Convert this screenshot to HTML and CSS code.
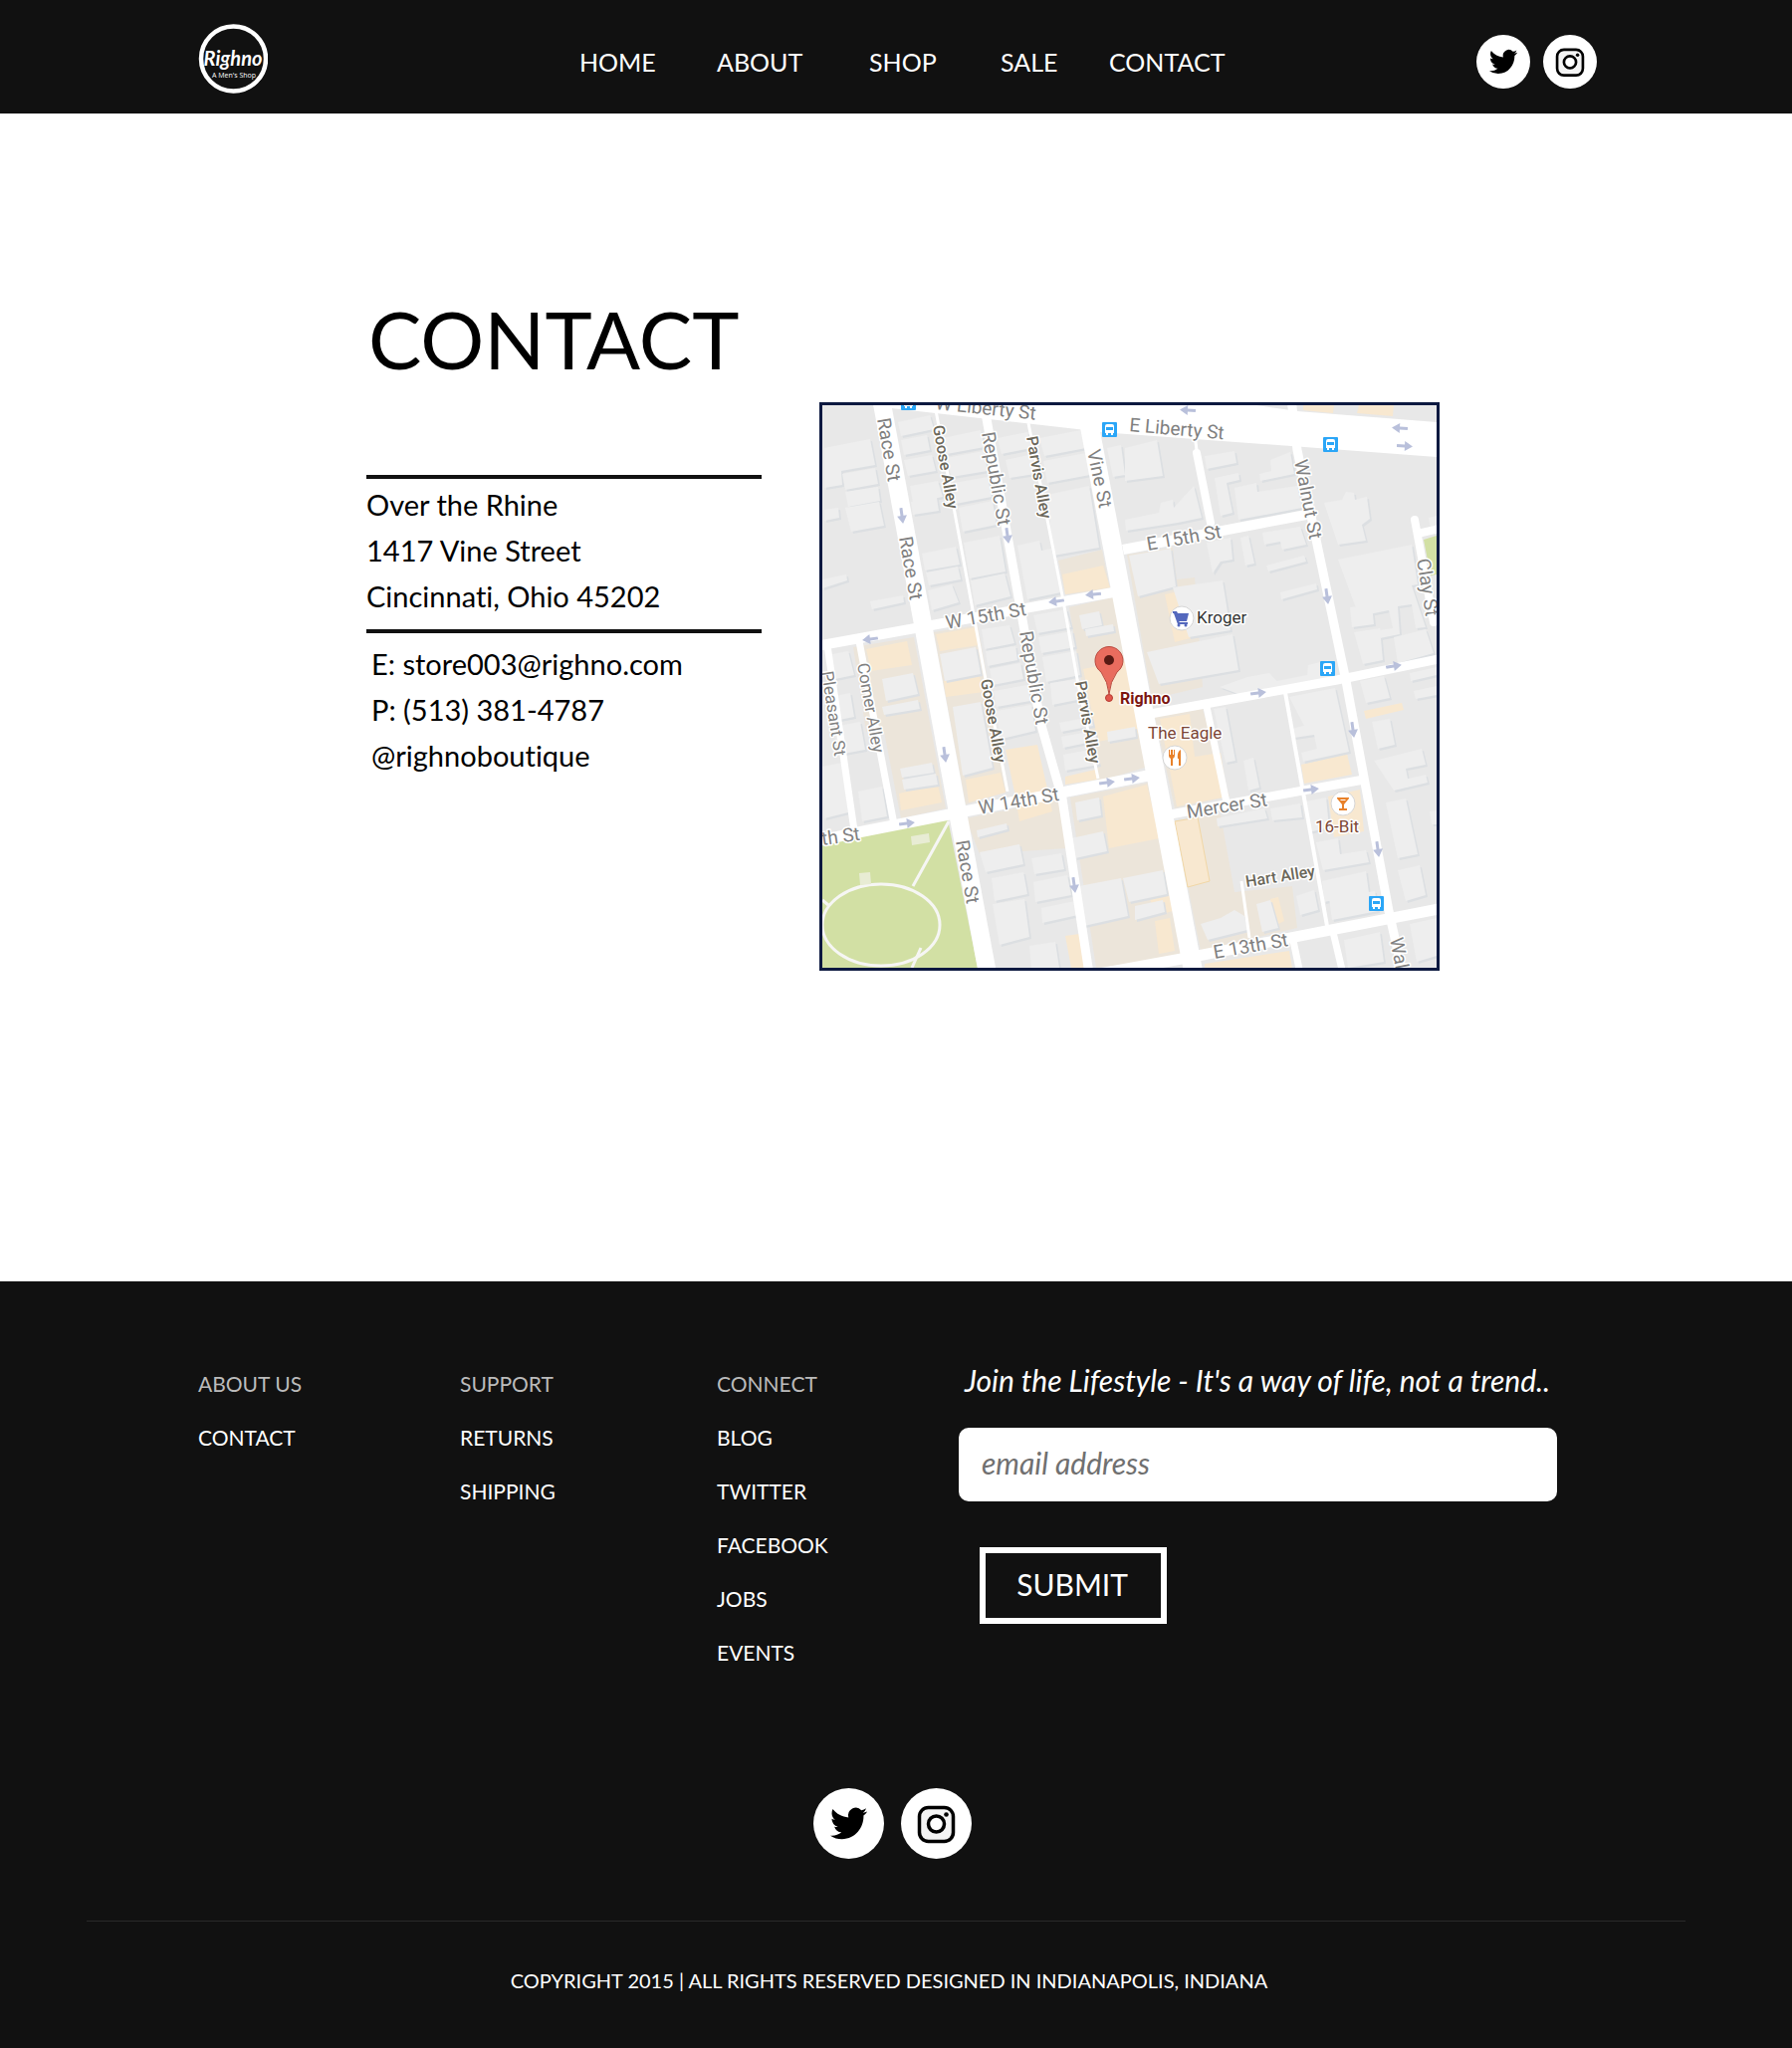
FILE: index.html
```html
<!DOCTYPE html>
<html lang="en">
<head>
<meta charset="utf-8">
<meta name="viewport" content="width=device-width, initial-scale=1">
<title>Righno - Contact</title>
<link rel="stylesheet" href="styles.css">
</head>
<body>
<svg class="defs" aria-hidden="true">
  <symbol id="twitter" viewBox="0 0 71 71">
    <circle cx="35.500" cy="35.500" r="35.500" fill="#fff"/>
    <path transform="translate(17 16) scale(1.550 1.620)" d="M23.953 4.570a10 10 0 01-2.825.775 4.958 4.958 0 002.163-2.723c-.951.555-2.005.959-3.127 1.184a4.920 4.920 0 00-8.384 4.482C7.690 8.095 4.067 6.130 1.640 3.162a4.822 4.822 0 00-.666 2.475c0 1.710.870 3.213 2.188 4.096a4.904 4.904 0 01-2.228-.616v.060a4.923 4.923 0 003.946 4.827 4.996 4.996 0 01-2.212.085 4.936 4.936 0 004.604 3.417 9.867 9.867 0 01-6.102 2.105c-.390 0-.779-.023-1.170-.067a13.995 13.995 0 007.557 2.209c9.053 0 13.998-7.496 13.998-13.985 0-.210 0-.420-.015-.630A9.935 9.935 0 0024 4.590z"/>
  </symbol>
  <symbol id="instagram" viewBox="0 0 71 71">
    <circle cx="35.500" cy="35.500" r="35.500" fill="#fff"/>
    <rect x="18.500" y="19.500" width="34" height="34" rx="9" fill="#f4f4f4" stroke="#000" stroke-width="3.500"/>
    <circle cx="35.500" cy="36" r="8" fill="#fff" stroke="#000" stroke-width="3.500"/>
    <circle cx="45.500" cy="26.500" r="2.300"/>
  </symbol>
  <symbol id="bus" viewBox="0 0 15 15">
    <rect width="15" height="15" rx="1" fill="#2ba6f7"/>
    <path fill="#fff" fill-rule="evenodd" d="M3 4q0-2 2-2h5q2 0 2 2v7h-1v2H9v-2H6v2H4v-2H3zM4 5v3h7V5z"/>
  </symbol>
  <symbol id="arrow" viewBox="0 0 16 10">
    <path fill="#b9c0db" d="M0 3.500h8V0l8 5-8 5V6.500H0z"/>
  </symbol>
</svg>

<header class="site-header">
  <a class="logo" href="#" aria-label="Righno, a men's shop">
    <svg viewBox="0 0 70 70" width="70" height="70">
      <circle cx="35.500" cy="35" r="32.500" fill="none" stroke="#fff" stroke-width="4.500"/>
      <text class="logo-name" x="35" y="42" text-anchor="middle">Righno</text>
      <text class="logo-tag" x="36" y="54" text-anchor="middle">A Men's Shop</text>
    </svg>
  </a>
  <nav class="main-nav">
    <a href="#">HOME</a>
    <a href="#">ABOUT</a>
    <a href="#">SHOP</a>
    <a href="#">SALE</a>
    <a href="#">CONTACT</a>
  </nav>
  <div class="social social-small">
    <a href="#" aria-label="Twitter"><svg><use href="#twitter"/></svg></a>
    <a href="#" aria-label="Instagram"><svg><use href="#instagram"/></svg></a>
  </div>
</header>

<main class="contact">
  <section class="details">
    <h1>CONTACT</h1>
    <address>
      <p class="street">Over the Rhine<br>1417 Vine Street<br>Cincinnati, Ohio 45202</p>
      <p class="reach">E: store003@righno.com<br>P: (513) 381-4787<br>@righnoboutique</p>
    </address>
  </section>

  <div class="map">
    <svg viewBox="826 407 617 565" role="img" aria-label="Map of Vine Street">
      <rect x="826" y="407" width="617" height="565" fill="#e8e8e8"/>

      <!-- commercial ground -->
      <g fill="#ece5da">
        <path d="M857 650L918 640L950 812L905 822L888 735L870 735z"/>
        <path d="M938 635L982 628L1012 795L970 808z"/>
        <path d="M1074 610L1118 600L1153 770L1103 785z"/>
        <path d="M970 822L1063 803L1072 852L984 858z"/>
        <path d="M1075 801L1153 786L1189 962L1101 972z"/>
        <path d="M1132 557L1178 550L1182 582L1200 580L1208 690L1157 702z"/>
        <path d="M1160 720L1208 712L1235 800L1180 812z"/>
        <path d="M1180 825L1226 818L1240 896L1298 890L1303 932L1206 955z"/>
        <path d="M1063 563L1107 552L1115 592L1070 597z"/>
      </g>
      <g fill="#f8e8d0">
        <path d="M870 652L911 644L916 668L875 674zM903 797L942 788L946 806L905 814z"/>
        <path d="M940 637L980 630L983 648L944 654zM948 684L984 679L988 695L950 700zM970 783L1005 776L1010 796L973 806z"/>
        <path d="M1010 753L1042 748L1052 792L1057 815L1024 825L1020 800z"/>
        <path d="M1067 577L1108 568L1115 590L1070 597zM1088 672L1140 662L1150 735L1103 745zM1070 780L1100 773L1102 783L1070 788z"/>
        <path d="M1108 800L1152 788L1165 842L1114 852zM1155 902L1175 898L1178 915L1160 920zM1160 925L1175 922L1180 955L1164 958zM1070 940L1084 938L1090 972L1076 972z"/>
        <path d="M1170 597L1192 592L1200 640L1180 645zM1165 722L1195 717L1200 760L1226 756L1233 800L1182 810z"/>
        <path d="M1180 825L1203 821L1215 885L1193 891z" stroke="#f1d7a6"/>
        <path d="M1276 903L1284 901L1290 925L1278 931zM1210 968L1295 955L1298 972H1210z"/>
        <path d="M1307 768L1353 757L1358 778L1310 787zM1334 800L1366 793L1370 835L1340 841zM1370 714L1408 706L1410 713L1372 722z"/>
        <path d="M1309 407H1340L1339 415L1309 412zM1365 407H1400L1399 418L1363 415z"/>
      </g>

      <!-- buildings over their shadows -->
      <use href="#blocks" x="2" y="2" class="shade"/>
      <use href="#blocks" class="roof"/>
      <defs>
        <g id="blocks">
          <path d="M828 450l46-9 5 26-34 6 1 14-18 3zM846 476l33-6 3 16-33 6zM849 494l33-5 2 14-32 6zM849 510l34-6 5 24-33 6zM828 512l14-2 1 10-15 3zM826 582l24-5 1 6-25 8zM874 604l33-6 1 7-32 7z"/>
          <path d="M902 424l32-7 4 14-33 7zM905 442l26-5 3 15-26 5zM908 462l28-5 4 16-28 5zM914 488l28-5 5 16-30 6zM915 504l26-4 2 13-26 4zM926 556l34-7 4 18-35 6zM930 575l32-6 3 13-32 6zM932 593l24-6 7 18-27 8z"/>
          <path d="M947 440l38-8 4 17-38 7zM950 460l38-7 4 20-36 6zM958 485l34-6 4 20-36 7zM963 510l34-7 4 24-34 7zM968 545l36-7 6 36-36 7zM975 583l34-7 6 23-36 9z"/>
          <path d="M1002 440l30-6 4 16-30 6zM1010 462l32-7 4 20-32 5zM1022 548l22-5 2 10 10-2 10 44-34 7z"/>
          <path d="M1044 440l42-8 5 18-42 8zM1048 463l43-8 4 22-43 8zM1052 497l42-9 10 62-46 8z"/>
          <path d="M832 658l20-4 6 24-24 5zM886 682l31-6 5 21-32 7zM886 710l36-7 2 9-36 6zM904 772l32-6 2 10-32 5zM906 783l34-6 2 11-34 5zM834 700l20-4 4 24-20 4zM838 730l26-5 5 28-27 5zM826 770l20-4 6 50-24 6zM862 795l24-5 5 30-25 5z"/>
          <path d="M944 657l36-7 5 27-36 7zM957 710l28-5 12 66-30 8zM986 632l28-4 5 18-30 6zM990 654l30-5 2 14-30 6zM994 672l31-6 3 16-31 6zM998 694l34-6 3 16-34 6zM1000 714l36-6 4 26-34 8z"/>
          <path d="M1038 618l33-6 5 18-34 6zM1043 640l34-6 3 16-34 6zM1047 660l34-6 4 24-34 7zM1055 686l28-4 4 20-30 6zM1064 726l32-6 2 9-32 6zM1066 740l34-6 2 10-34 7zM1068 758l32-6 4 16-34 6z"/>
          <path d="M1084 618l20-4 3 14-20 4zM1090 632l28-5 1 7-28 5zM1112 735l28-5 1 10-28 5z"/>
          <path d="M981 834l30-7 1 6-30 8zM984 856l40-8 4 20-38 8zM996 882l32-6 4 22-33 7zM997 908l32-5 5 38-30 8zM1036 862l30-5 3 16-30 5zM1038 886l34-7 4 20-36 7zM1046 912l34-7 3 14-36 8zM1034 950l26-4 4 26h-28z"/>
          <path d="M1076 842l32-7 4 20-32 7zM1084 890l42-8 7 38-44 10zM1080 806l24-5 2 18-24 5zM1128 882l40-8 4 24-38 8zM1140 910l28-6 2 12-30 8z"/>
          <path d="M1130 450l32-8 6 36-38 5zM1112 450l14-3 4 30-12 2zM1130 522l34-7 2-10 12-3 1 8 20-22 8 32-24 5-52 8z"/>
          <path d="M1210 458l30-5 2 12-30 6zM1220 480l24-5 1 7-13 3 6 30-12 3zM1240 490l22-5 1 9 40-6 5 22-64 12zM1276 462l20-8 4 22-34 7-1-7 12-3z"/>
          <path d="M1212 545l24-5 2 22-12 2-8 12zM1246 540l8-2 6 28-9 2zM1272 568l38-10 2 6-38 10zM1286 595l36-9 1 6-36 10zM1268 535l38-6 6 18-24 5-2-8-16 3zM1134 558l42-7 5 38-38 10zM1178 590l50-7 8 50-42 7zM1152 655l86-18 6 36-80 14z"/>
          <path d="M1225 690l28-10 22-4 8 8 30-6 1-10 20-5 5 18-90 18zM1330 505l18-3 4-8 8 1 1 7 12-3 3 22-8 6 4 16-28 4z"/>
          <path d="M1344 562l74-15 6 40-6 1 14 42-10 1-4-24-14 2 2 28-20 4-1-8 14-2-4-18-30 6zM1356 610l22-3 2 20-22 3zM1360 635l26-4 3 32-20 4zM1400 640l32-8 8 24-36 10zM1435 520l8-2v12l-6 1zM1416 676l27-6v8l-26 6zM1366 684l24-5 6 22-24 5z"/>
          <path d="M1219 712l12-2 10 54-10 2zM1249 764l10-3 6 30-11 3zM1295 700l46-9 14 64-46 10-2-9 16-4-3-14-20 3-2-9 12-3z"/>
          <path d="M1222 822l48-10 3 10-50 8zM1276 812l30-5 2 14-30 3zM1312 805l20-4 3 30-20 5zM1322 846l22-4 2 16 26-4 3 12-46 8zM1328 885l44-10 3 22-45 9zM1335 902l46-7 3 20-46 9z"/>
          <path d="M1206 928l20-6 14-8 10 6 3 14-40 10zM1262 908l14-4 8 28-16 4zM1302 900l18-6 4 20-18 5zM1378 725l18-3 5 26-17 4zM1380 764l48-12 4 16-20 4 2 10 18-4 2 8-34 8zM1392 806l20-4 12 56-20 4zM1404 874l22-5 6 30-20 6zM1416 928l27-6v38l-20 6zM1350 944l36-8 4 30-36 6zM1436 815l7-1v14h-5zM1420 694l23-5v9l-21 4z"/>
        </g>
      </defs>

      <!-- park and green -->
      <path fill="#d2e0a4" d="M826 848L952 823L982 972H826zM1430 542L1443 538V577L1437 578z"/>
      <g class="park-path">
        <ellipse cx="885" cy="929" rx="59" ry="41"/>
        <path d="M953 825L917 890M925 952L916 972M826 904l6 5"/>
      </g>
      <path fill="#e8ecd4" d="M915 840l18-3 1 9-18 3zM863 877l11-1 1 12-11 1z"/>

      <!-- streets -->
      <path fill="#fff" d="M885 407H1262L1303 413L1443 424V459L1297 448L1105 434L1082 431L895 410z"/>
      <g class="road">
        <path stroke-width="18" d="M885 400L992 978"/>
        <path stroke-width="19" d="M1094 426L1199 978"/>
        <path stroke-width="9" d="M990 415L1028 628L1045 725L1067 802L1094 978"/>
        <path stroke-width="3" d="M940 412L988 672L1012 795M1033 425L1067 598L1082 682L1103 782"/>
        <path stroke-width="10" d="M820 649L1118 595M1128 552L1312 517"/>
        <path stroke-width="11" d="M820 845L862 836L1158 778M1060 986L1198 961L1450 912"/>
        <path stroke-width="9" d="M1150 718L1343 683L1450 661M1170 819L1370 783"/>
        <path stroke-width="9" d="M1297 400L1303 452L1352 684L1395 915L1409 978"/>
        <path stroke-width="8" stroke-linecap="round" d="M1202 455L1216 525M1421 522L1440 625M1424 536L1450 530"/>
        <path stroke-width="3" d="M1200 436L1202 452M1247 885L1255 942"/>
        <path stroke-width="7" d="M831 648L858 834M863 644L898 828M1212 710L1232 806M1298 940L1306 978M1338 932L1349 978"/>
        <path stroke-width="4" d="M1290 690L1333 930"/>
      </g>

      <!-- one-way arrows -->
      <g>
        <use href="#arrow" width="16" height="10" x="-8" y="-5" transform="translate(874 642) rotate(172)"/>
        <use href="#arrow" width="16" height="10" x="-8" y="-5" transform="translate(1061 604) rotate(172)"/>
        <use href="#arrow" width="16" height="10" x="-8" y="-5" transform="translate(1098 597) rotate(175)"/>
        <use href="#arrow" width="16" height="10" x="-8" y="-5" transform="translate(1193 412) rotate(183)"/>
        <use href="#arrow" width="16" height="10" x="-8" y="-5" transform="translate(1406 430) rotate(183)"/>
        <use href="#arrow" width="16" height="10" x="-8" y="-5" transform="translate(1411 448) rotate(3)"/>
        <use href="#arrow" width="16" height="10" x="-8" y="-5" transform="translate(1400 669) rotate(-9)"/>
        <use href="#arrow" width="16" height="10" x="-8" y="-5" transform="translate(911 827) rotate(-7)"/>
        <use href="#arrow" width="16" height="10" x="-8" y="-5" transform="translate(1112 786) rotate(-7)"/>
        <use href="#arrow" width="16" height="10" x="-8" y="-5" transform="translate(1137 782) rotate(-7)"/>
        <use href="#arrow" width="16" height="10" x="-8" y="-5" transform="translate(1264 696) rotate(-7)"/>
        <use href="#arrow" width="16" height="10" x="-8" y="-5" transform="translate(1317 793) rotate(-7)"/>
        <use href="#arrow" width="16" height="10" x="-8" y="-5" transform="translate(906 518) rotate(82)"/>
        <use href="#arrow" width="16" height="10" x="-8" y="-5" transform="translate(1012 538) rotate(82)"/>
        <use href="#arrow" width="16" height="10" x="-8" y="-5" transform="translate(949 758) rotate(82)"/>
        <use href="#arrow" width="16" height="10" x="-8" y="-5" transform="translate(1079 889) rotate(82)"/>
        <use href="#arrow" width="16" height="10" x="-8" y="-5" transform="translate(1333 599) rotate(82)"/>
        <use href="#arrow" width="16" height="10" x="-8" y="-5" transform="translate(1359 733) rotate(82)"/>
        <use href="#arrow" width="16" height="10" x="-8" y="-5" transform="translate(1384 853) rotate(82)"/>
      </g>

      <!-- bus stops -->
      <use href="#bus" x="905" y="397" width="15" height="15"/>
      <use href="#bus" x="1107" y="424" width="15" height="15"/>
      <use href="#bus" x="1329" y="439" width="15" height="15"/>
      <use href="#bus" x="1326" y="664" width="15" height="15"/>
      <use href="#bus" x="1375" y="900" width="15" height="15"/>

      <g class="street-name">
        <text transform="translate(881 421) rotate(80)">Race St</text>
        <text transform="translate(903 540) rotate(80)">Race St</text>
        <text transform="translate(960 845) rotate(80)">Race St</text>
        <text transform="translate(986 435) rotate(80)">Republic St</text>
        <text transform="translate(1024 635) rotate(80)">Republic St</text>
        <text transform="translate(1092 453) rotate(78)">Vine St</text>
        <text transform="translate(1300 463) rotate(79)">Walnut St</text>
        <text transform="translate(1423 562) rotate(81)">Clay St</text>
        <text transform="translate(1396 943) rotate(79)">Walnut St</text>
        <text transform="translate(939 411) rotate(6)">W Liberty St</text>
        <text transform="translate(1134 433) rotate(5)">E Liberty St</text>
        <text transform="translate(951 632) rotate(-10)">W 15th St</text>
        <text transform="translate(1153 553) rotate(-10)">E 15th St</text>
        <text transform="translate(984 818) rotate(-10)">W 14th St</text>
        <text transform="translate(826 849) rotate(-8)">th St</text>
        <text transform="translate(1193 822) rotate(-9)">Mercer St</text>
        <text transform="translate(1220 963) rotate(-10)">E 13th St</text>
        <text class="small" transform="translate(825 675) rotate(81)">Pleasant St</text>
        <text class="small" transform="translate(861 667) rotate(80)">Comer Alley</text>
      </g>
      <g class="alley-name">
        <text transform="translate(937 428) rotate(80)">Goose Alley</text>
        <text transform="translate(985 683) rotate(80)">Goose Alley</text>
        <text transform="translate(1031 439) rotate(80)">Parvis Alley</text>
        <text transform="translate(1080 685) rotate(80)">Parvis Alley</text>
        <text transform="translate(1252 891) rotate(-9)">Hart Alley</text>
      </g>

      <!-- places -->
      <g stroke="#d6d6d6" fill="#fff">
        <circle cx="1187" cy="621" r="12"/>
        <circle cx="1180" cy="761" r="12"/>
        <circle cx="1349" cy="807" r="12"/>
      </g>
      <path fill="#5468bd" d="M1178 614h4l1 2h11l-2 8h-8l1 1h8v2h-10l-4-11h-1z"/>
      <g fill="#5468bd"><circle cx="1184" cy="628" r="1.500"/><circle cx="1191" cy="628" r="1.500"/></g>
      <path fill="#e8812a" d="M1174 753v6q0 2 2 3v7h2v-7q2-1 2-3v-6h-1v5h-1v-5h-2v5h-1v-5zM1186 753q-4 2-3 9h1v7h2z"/>
      <path fill="#e8812a" d="M1343 801h12v1l-5 6v4h3v2h-8v-2h3v-4l-5-6zm3 2l1 1h4l1-1z"/>
      <text class="place kroger" x="1202" y="626">Kroger</text>
      <text class="place food" x="1153" y="742">The Eagle</text>
      <text class="place food" x="1321" y="836">16-Bit</text>
      <text class="place self" x="1125" y="707">Righno</text>
      <circle cx="1114" cy="701" r="3.500" fill="#e2574c" stroke="#b53a30"/>
      <path fill="#e96c5e" stroke="#b9493e" d="M1114 697q-1-12-8-22a14 14 0 1 1 16 0q-7 10-8 22z"/>
      <circle cx="1114" cy="663" r="5" fill="#571913"/>
    </svg>
  </div>
</main>

<footer class="site-footer">
  <div class="footer-grid">
    <section>
      <h2>ABOUT US</h2>
      <a href="#">CONTACT</a>
    </section>
    <section>
      <h2>SUPPORT</h2>
      <a href="#">RETURNS</a>
      <a href="#">SHIPPING</a>
    </section>
    <section>
      <h2>CONNECT</h2>
      <a href="#">BLOG</a>
      <a href="#">TWITTER</a>
      <a href="#">FACEBOOK</a>
      <a href="#">JOBS</a>
      <a href="#">EVENTS</a>
    </section>
    <form class="signup">
      <label for="email">Join the Lifestyle - It's a way of life, not a trend..</label>
      <input id="email" type="email" placeholder="email address">
      <button type="submit">SUBMIT</button>
    </form>
  </div>
  <div class="social social-large">
    <a href="#" aria-label="Twitter"><svg><use href="#twitter"/></svg></a>
    <a href="#" aria-label="Instagram"><svg><use href="#instagram"/></svg></a>
  </div>
  <p class="copyright">COPYRIGHT 2015 | ALL RIGHTS RESERVED DESIGNED IN INDIANAPOLIS, INDIANA</p>
</footer>
</body>
</html>
```
FILE: styles.css
```css
* { box-sizing: border-box; }

body {
  margin: 0;
  background: #fff;
  color: #000;
  font-family: "Gill Sans", Lato, sans-serif;
  font-variant-ligatures: none;
}

a { color: inherit; text-decoration: none; }

.defs { position: absolute; width: 0; height: 0; }

/* header */
.site-header {
  display: flex;
  align-items: center;
  min-height: 114px;
  padding: 10px 196px 0 199px;
  background: #111;
  color: #fff;
}

.logo svg { display: block; margin-bottom: 6px; }
.logo-name { font: italic 700 20px Lato, sans-serif; fill: #fff; }
.logo-tag { font: 7px "Open Sans", sans-serif; fill: #fff; }

.main-nav {
  display: grid;
  grid-template-columns: 138px 153px 132px 109px auto;
  margin-left: 313px;
  font-size: 25px;
  line-height: 30px;
}

.social { display: flex; }
.social svg { display: block; width: 100%; height: 100%; }
.social-small { gap: 13px; margin-left: auto; }
.social-small a { width: 54px; height: 54px; }
.social-large { gap: 17px; justify-content: center; padding-left: 12px; }
.social-large a { width: 71px; height: 71px; }

/* contact */
.contact {
  display: grid;
  grid-template-columns: 397fr 623fr;
  align-items: start;
  gap: 58px;
  padding: 179px 354px 312px 368px;
}

.details h1 {
  margin: 0 0 90px;
  padding-left: 2px;
  font-size: 80px;
  font-weight: 400;
  line-height: 94px;
}

.details address { font-size: 29px; font-style: normal; line-height: 46px; }
.details p { margin: 0; border-top: 4px solid #111; white-space: nowrap; }
.details .street { padding: 3px 0 10px; }
.details .reach { padding: 8px 0 0 5px; }

.map { margin-top: 111px; border: 3px solid #0c1940; }
.map svg { display: block; width: 100%; }
.map text { font-family: Roboto, sans-serif; paint-order: stroke; stroke: #fff; stroke-width: 3px; stroke-linejoin: round; }
.street-name { font-size: 19px; fill: #808080; }
.street-name .small { font-size: 17px; }
.alley-name { font-size: 16px; font-weight: 500; fill: #6b675a; }
.kroger { font-size: 17px; fill: #333; }
.food { font-size: 17px; fill: #7c4535; }
.self { font-size: 16px; font-weight: 700; fill: #7c1410; }
.road { fill: none; stroke: #fff; }
.park-path { fill: none; stroke: #f6f6f4; stroke-width: 3px; }
.shade { fill: #dcdfe2; }
.roof { fill: #eee; }

/* footer */
.site-footer {
  padding: 76px 107px 53px 87px;
  background: #111;
  color: #fff;
}

.footer-grid {
  display: grid;
  grid-template-columns: 263fr 258fr 243fr 601fr;
  margin: 0 129px 109px 112px;
}

.footer-grid h2,
.footer-grid section a {
  display: block;
  margin: 0;
  font-size: 21px;
  font-weight: 400;
  line-height: 54px;
}
.footer-grid h2 { color: #bbb; }

.signup { display: flex; flex-direction: column; align-items: flex-start; }
.signup label {
  margin: 3px 0 28px 6px;
  font-size: 30px;
  font-style: italic;
  line-height: 40px;
  white-space: nowrap;
}
.signup input {
  width: 100%;
  height: 74px;
  padding: 0 23px 4px;
  border: 0;
  border-radius: 10px;
  background: #fff;
  font: italic 30px "Gill Sans", Lato, sans-serif;
}
.signup input::placeholder { color: #707070; }
.signup button {
  width: 188px;
  height: 77px;
  margin: 46px 0 0 21px;
  padding: 0 2px 4px 0;
  border: 6px solid #fff;
  background: transparent;
  color: #fff;
  font: 30px "Gill Sans", Lato, sans-serif;
}

.copyright {
  margin: 62px 0 0;
  padding: 44px 0 0 6px;
  border-top: 1px solid #2a2a2a;
  font-size: 20px;
  line-height: 30px;
  text-align: center;
}

@media (max-width: 1500px) {
  .site-header { flex-wrap: wrap; justify-content: space-between; gap: 20px; padding: 10px 40px; }
  .main-nav { display: flex; flex-wrap: wrap; gap: 30px; margin-left: 0; }
  .social-small { margin-left: 0; }
  .contact { grid-template-columns: 1fr; padding: 80px 40px; }
  .map { margin-top: 0; }
  .footer-grid { grid-template-columns: repeat(auto-fit, minmax(200px, 1fr)); margin: 0 0 60px; }
  .signup { grid-column: 1 / -1; }
  .signup label { white-space: normal; }
  .site-footer { padding: 40px; }
}
```
